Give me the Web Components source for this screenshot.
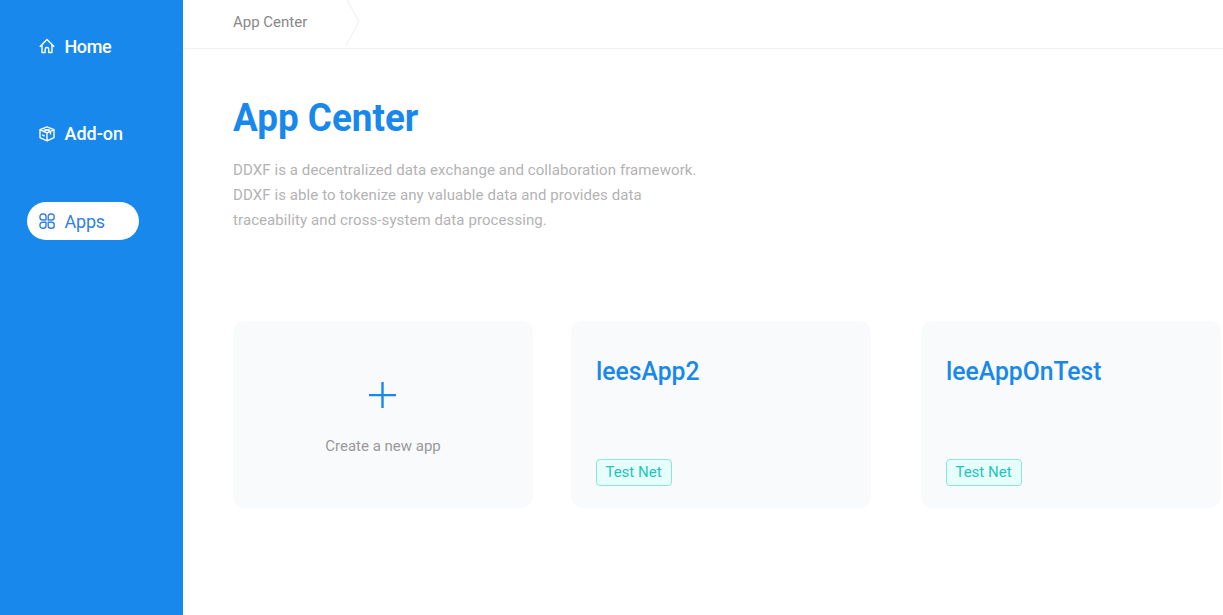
<!DOCTYPE html>
<html lang="en">
<head>
<meta charset="utf-8">
<title>App Center</title>
<style>
  html, body { margin: 0; height: 100%; overflow: hidden; background: #fff; }
  body { font-family: Roboto, "Liberation Sans", sans-serif; }
</style>
</head>
<body>
<app-shell>
  <side-nav slot="nav">
    <nav-item icon="home" style="letter-spacing:-.4px">Home</nav-item>
    <nav-item icon="box">Add-on</nav-item>
    <nav-item icon="apps" active>Apps</nav-item>
  </side-nav>
  <crumb-bar slot="top">App Center</crumb-bar>
  <page-intro heading="App Center">DDXF is a decentralized data exchange and collaboration framework. DDXF is able to tokenize any valuable data and provides data traceability and cross-system data processing.</page-intro>
  <card-row>
    <create-card slot="create">Create a new app</create-card>
    <app-card name="leesApp2"><net-tag>Test Net</net-tag></app-card>
    <app-card name="leeAppOnTest"><net-tag>Test Net</net-tag></app-card>
  </card-row>
</app-shell>
<script>
const define = (name, html, setup) => customElements.define(name, class extends HTMLElement {
  constructor() {
    super();
    const root = this.attachShadow({ mode: 'open' });
    const t = document.createElement('template');
    t.innerHTML = html;
    root.append(t.content.cloneNode(true));
    if (setup) setup(this, root);
  }
});

define('app-shell', `<style>
  :host { display: flex; height: 615px; }
  main { flex: 1; min-width: 0; }
</style><slot name="nav"></slot><main><slot name="top"></slot><slot></slot></main>`);

define('side-nav', `<style>
  :host { display: flex; flex-direction: column; gap: 49.5px; width: 183px; flex: none; box-sizing: border-box; padding: 27px 0 0 27px; background: #1888ed; }
</style><slot></slot>`);

const icons = {
  home: '<path d="M.8 8.8 8 1.6l7.2 7.2M3 7v7.5h3.2v-3.2a1.8 1.8 0 0 1 3.6 0v3.2H13V7"/>',
  box: '<path d="M8 .9 15 3.7v7.9L8 14.8 1 11.6V3.7zM1 3.9l7 3 7-3M8 6.9v7.9M4.4 2.4l7.1 3v3.2M11.6 2.4l-7.1 3M3.2 8.9l2.4 1.1"/>',
  apps: '<path d="M7 7H3.5A2.5 2.5 0 0 1 1 4.5v-1A2.5 2.5 0 0 1 3.5 1h1A2.5 2.5 0 0 1 7 3.5zM9.2 7V3.5A2.5 2.5 0 0 1 11.7 1h1a2.5 2.5 0 0 1 2.5 2.5v1A2.5 2.5 0 0 1 12.7 7zM7 9.2v3.5a2.5 2.5 0 0 1-2.5 2.5h-1A2.5 2.5 0 0 1 1 12.7v-1a2.5 2.5 0 0 1 2.5-2.5zM9.2 9.2h3.5a2.5 2.5 0 0 1 2.5 2.5v1a2.5 2.5 0 0 1-2.5 2.5h-1a2.5 2.5 0 0 1-2.5-2.5z"/>'
};
define('nav-item', `<style>
  :host { display: flex; align-items: center; gap: 9.5px; width: 112px; height: 38px; box-sizing: border-box; padding-left: 12px; border-radius: 19px; color: #fff; font-size: 18px; font-weight: 500; line-height: 38px; }
  :host([active]) { background: #fff; color: #2f7fe6; font-weight: 400; letter-spacing: -.2px; }
  :host([icon="box"]) span { padding-top: 0; }
  span { padding-top: 2px; }
  svg { width: 16px; height: 16px; fill: none; stroke: currentColor; stroke-width: 1.4; stroke-linejoin: round; flex: none; }
</style><svg viewBox="0 0 16 16"></svg><span><slot></slot></span>`,
(el, root) => { root.querySelector('svg').innerHTML = icons[el.getAttribute('icon')]; });

define('crumb-bar', `<style>
  :host { display: flex; height: 48px; border-bottom: 1px solid #f2f2f2; padding-left: 50px; color: #888; font-size: 15px; line-height: 44px; }
  span { width: 112px; }
  svg { width: 16px; height: 48px; fill: none; stroke: #ededed; }
</style><span><slot></slot></span><svg viewBox="0 0 16 48"><path d="M2 0 14 21.5 0 47"/></svg>`);

define('page-intro', `<style>
  :host { display: block; padding: 45px 0 0 50px; }
  h1 { margin: 0; color: #1888ed; font-size: 39px; font-weight: 700; line-height: 49px; letter-spacing: 0; transform: scaleX(.945); transform-origin: left; }
  p { margin: 15px 0 0; width: 470px; color: #b3b3b3; font-size: 15px; line-height: 25px; letter-spacing: .09px; }
</style><h1></h1><p><slot></slot></p>`,
(el, root) => { root.querySelector('h1').textContent = el.getAttribute('heading'); });

define('card-row', `<style>
  :host { display: flex; gap: 38px; padding: 88px 0 0 50px; }
  div { display: flex; gap: 50px; }
</style><slot name="create"></slot><div><slot></slot></div>`);

const card = 'width: 300px; height: 187px; box-sizing: border-box; flex: none; border-radius: 12px; background: #f9fafc;';
define('create-card', `<style>
  :host { display: flex; flex-direction: column; align-items: center; ${card} padding-top: 61px; color: #999; font-size: 15px; line-height: 20px; }
  svg { width: 27px; height: 26px; margin: 0 1px 28px 0; stroke: #1888ed; stroke-width: 2.4; }
</style><svg viewBox="0 0 27 26"><path d="M13.5 0v26M0 13.1h27"/></svg><span><slot></slot></span>`);

define('app-card', `<style>
  :host { display: flex; flex-direction: column; align-items: flex-start; justify-content: space-between; ${card} padding: 34px 25px 22px; }
  h2 { margin: 0 0 0 -.5px; color: #1888ed; font-size: 26px; font-weight: 500; line-height: 32px; transform: scaleX(.95); transform-origin: left; }
</style><h2></h2><slot></slot>`,
(el, root) => { root.querySelector('h2').textContent = el.getAttribute('name'); });

define('net-tag', `<style>
  :host { display: block; width: 76px; height: 27px; box-sizing: border-box; border: 1px solid #87e8de; border-radius: 4px; background: #e6fffb; color: #22c3c1; font-size: 15px; line-height: 25px; text-align: center; padding-right: 1px; }
</style><slot></slot>`);
</script>
</body>
</html>
